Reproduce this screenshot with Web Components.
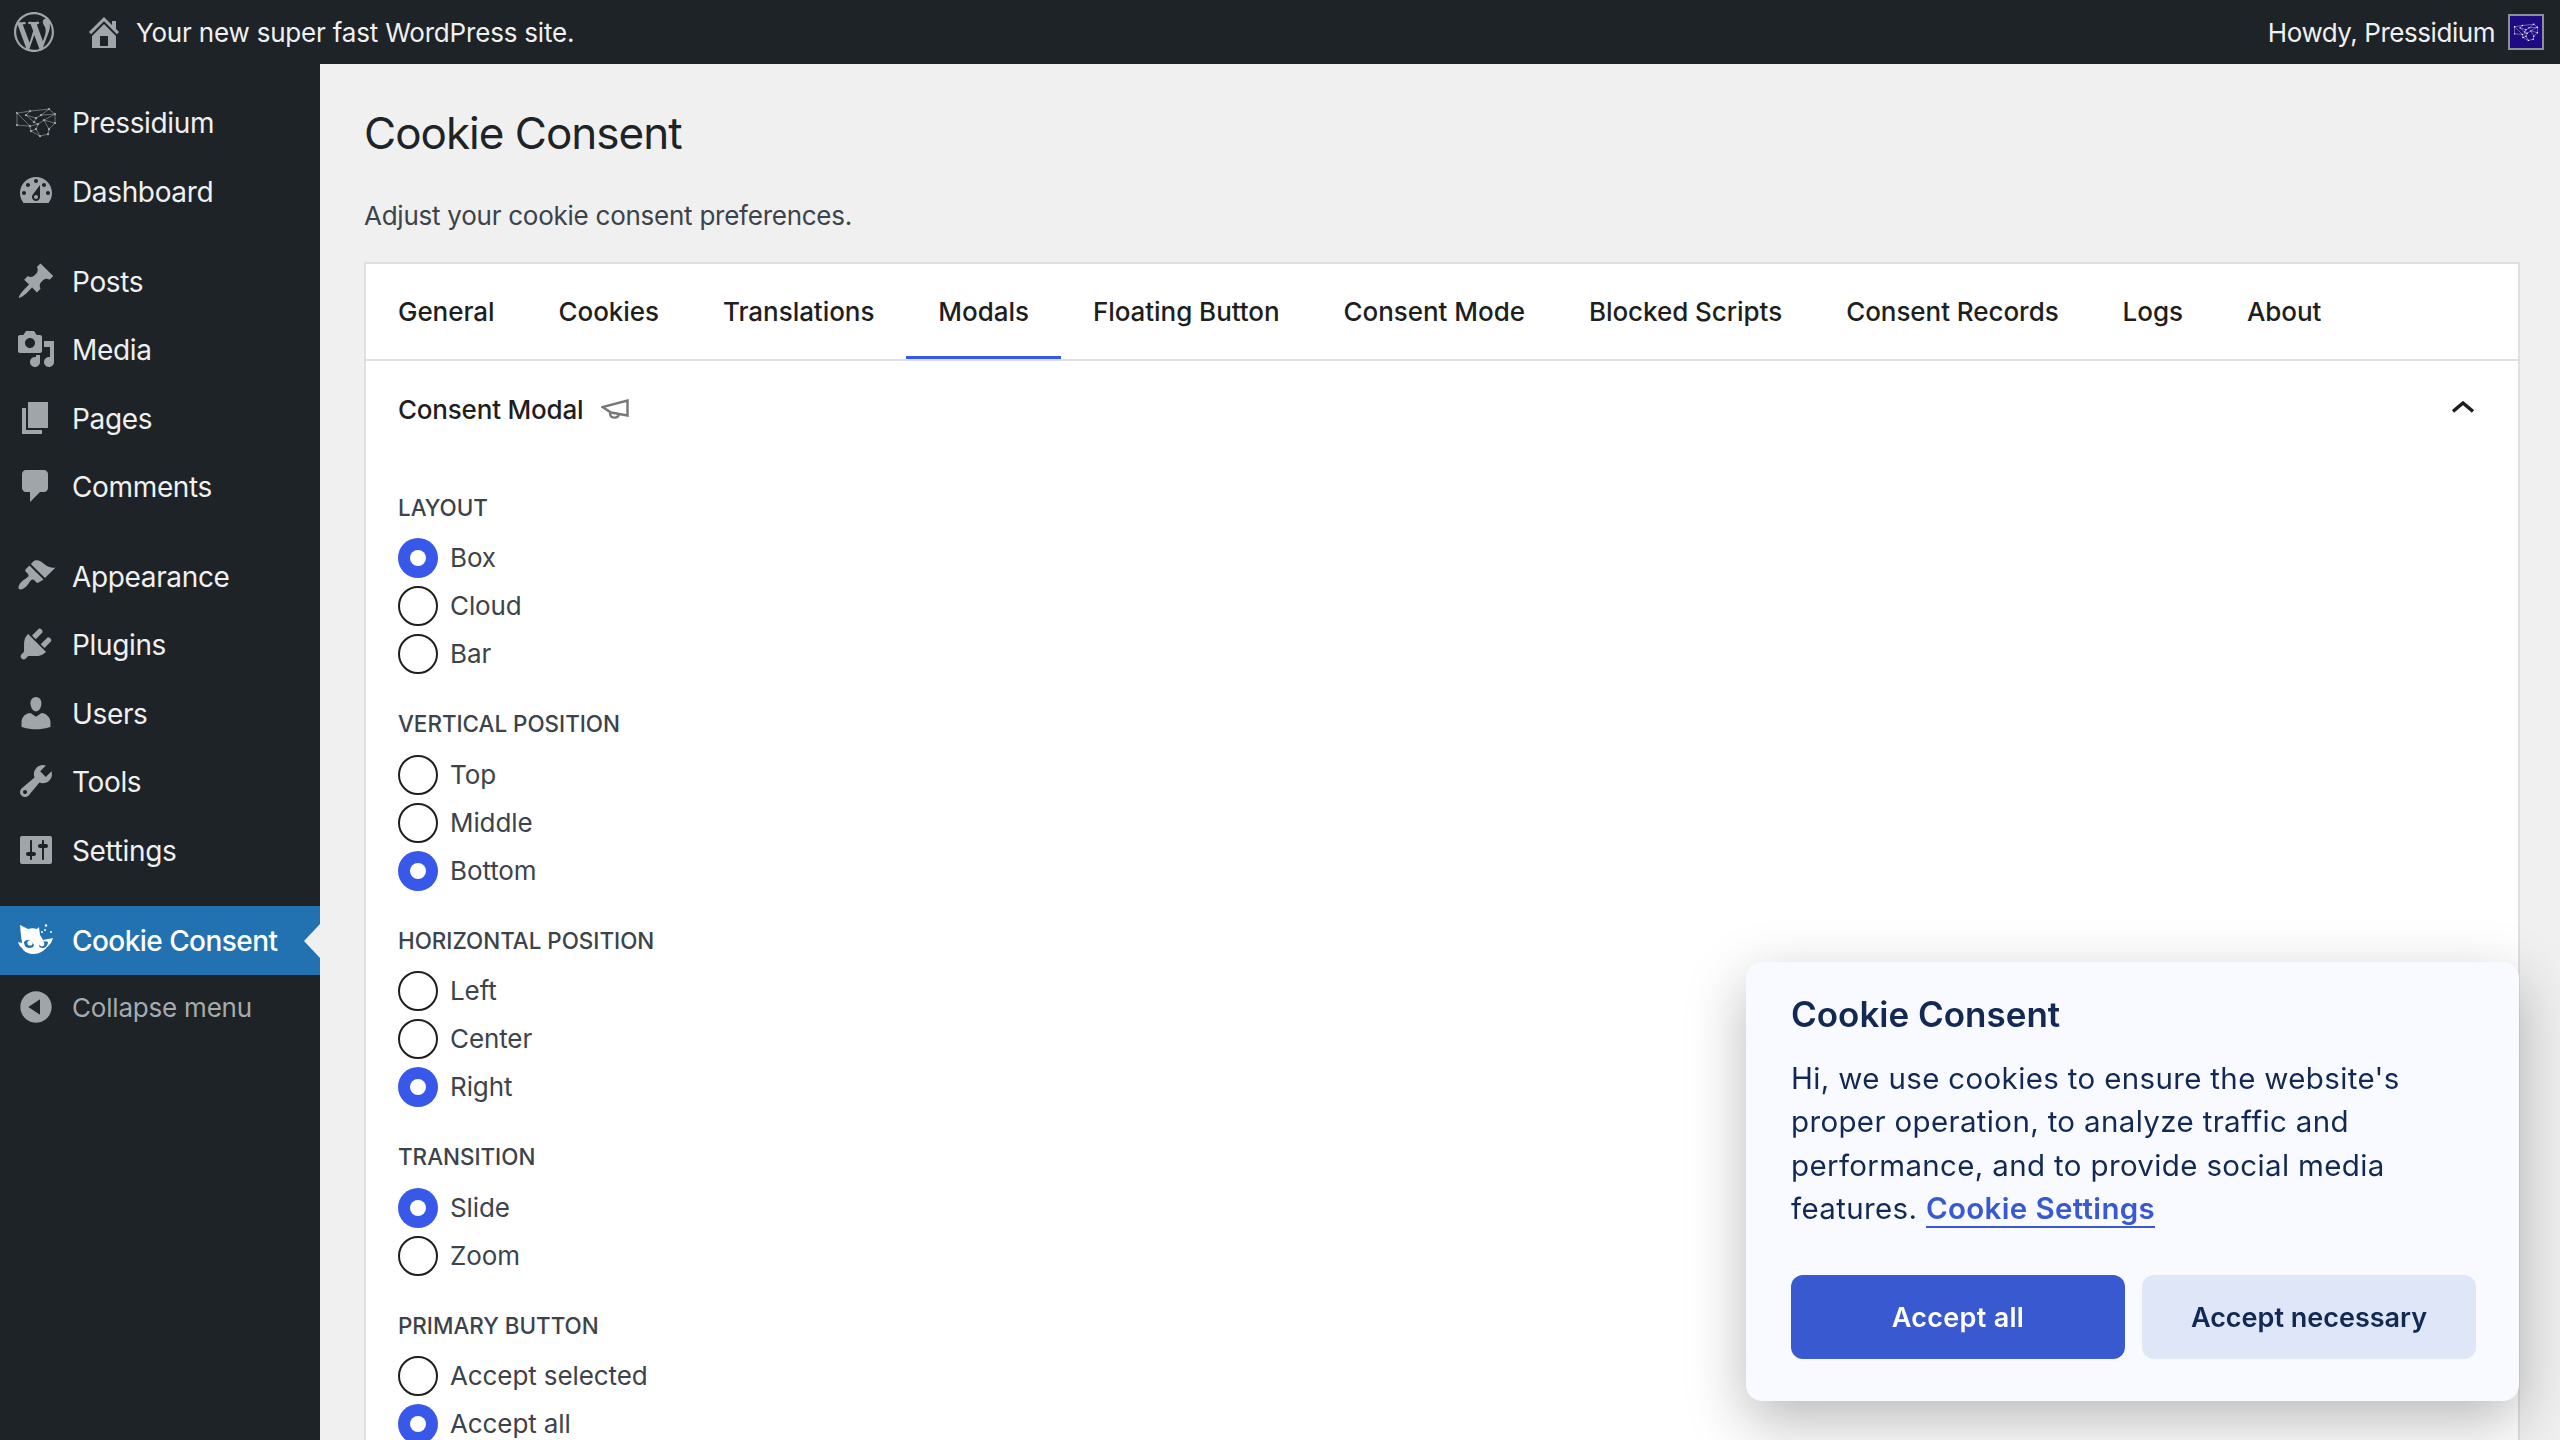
<!doctype html>
<html>
<head>
<meta charset="utf-8">
<title>Cookie Consent</title>
<style>
  html, body { margin: 0; height: 100%; }
  body {
    font-family: Inter, "Liberation Sans", sans-serif;
    background: #f0f0f0;
    overflow: hidden;
    display: grid;
    grid-template: 64px 1fr / 320px 1fr;
    width: 2560px;
    height: 1440px;
  }
  wp-admin-bar { grid-column: 1 / 3; }
</style>
</head>
<body>

<wp-admin-bar>
  <span slot="site">Your new super fast WordPress site.</span>
  <span slot="user">Howdy, Pressidium</span>
</wp-admin-bar>

<wp-sidebar>
  <wp-menu-item icon="pressidium">Pressidium</wp-menu-item>
  <wp-menu-item icon="dashboard">Dashboard</wp-menu-item>
  <wp-menu-sep></wp-menu-sep>
  <wp-menu-item icon="post">Posts</wp-menu-item>
  <wp-menu-item icon="media">Media</wp-menu-item>
  <wp-menu-item icon="page">Pages</wp-menu-item>
  <wp-menu-item icon="comments">Comments</wp-menu-item>
  <wp-menu-sep></wp-menu-sep>
  <wp-menu-item icon="appearance">Appearance</wp-menu-item>
  <wp-menu-item icon="plugins">Plugins</wp-menu-item>
  <wp-menu-item icon="users">Users</wp-menu-item>
  <wp-menu-item icon="tools">Tools</wp-menu-item>
  <wp-menu-item icon="settings">Settings</wp-menu-item>
  <wp-menu-sep></wp-menu-sep>
  <wp-menu-item icon="cookie" current>Cookie Consent</wp-menu-item>
  <wp-menu-item icon="collapse" muted>Collapse menu</wp-menu-item>
</wp-sidebar>

<cc-page>
  <span slot="title">Cookie Consent</span>
  <span slot="desc">Adjust your cookie consent preferences.</span>
  <cc-tabs>
    <cc-tab>General</cc-tab>
    <cc-tab>Cookies</cc-tab>
    <cc-tab>Translations</cc-tab>
    <cc-tab active>Modals</cc-tab>
    <cc-tab>Floating Button</cc-tab>
    <cc-tab>Consent Mode</cc-tab>
    <cc-tab>Blocked Scripts</cc-tab>
    <cc-tab>Consent Records</cc-tab>
    <cc-tab>Logs</cc-tab>
    <cc-tab>About</cc-tab>
  </cc-tabs>
  <cc-panel heading="Consent Modal">
    <cc-group label="Layout">
      <cc-radio checked>Box</cc-radio>
      <cc-radio>Cloud</cc-radio>
      <cc-radio>Bar</cc-radio>
    </cc-group>
    <cc-group label="Vertical Position">
      <cc-radio>Top</cc-radio>
      <cc-radio>Middle</cc-radio>
      <cc-radio checked>Bottom</cc-radio>
    </cc-group>
    <cc-group label="Horizontal Position">
      <cc-radio>Left</cc-radio>
      <cc-radio>Center</cc-radio>
      <cc-radio checked>Right</cc-radio>
    </cc-group>
    <cc-group label="Transition">
      <cc-radio checked>Slide</cc-radio>
      <cc-radio>Zoom</cc-radio>
    </cc-group>
    <cc-group label="Primary Button">
      <cc-radio>Accept selected</cc-radio>
      <cc-radio checked>Accept all</cc-radio>
    </cc-group>
  </cc-panel>
</cc-page>

<cc-modal>
  <span slot="title">Cookie Consent</span>
  Hi, we use cookies to ensure the website's<br>proper operation, to analyze traffic and<br>performance, and to provide social media<br>features. <a href="#" style="color:#3859d0;font-weight:600;text-decoration:none;border-bottom:2px solid #3859d0">Cookie Settings</a>
</cc-modal>

<script>
// dashicons, 20x20
const ICONS = {
  wordpress: 'M20 10c0-5.51-4.49-10-10-10C4.48 0 0 4.49 0 10c0 5.52 4.48 10 10 10 5.51 0 10-4.48 10-10zM7.78 15.37L4.37 6.22c.55-.02 1.17-.08 1.17-.08.5-.06.44-1.13-.06-1.11 0 0-1.45.11-2.37.11-.18 0-.37 0-.58-.01C4.12 2.69 6.87 1.11 10 1.11c2.33 0 4.45.87 6.05 2.34-.68-.11-1.65.39-1.65 1.58 0 .74.45 1.36.9 2.1.35.61.55 1.36.55 2.46 0 1.49-1.4 5-1.4 5l-3.03-8.37c.54-.02.82-.17.82-.17.5-.05.44-1.25-.06-1.22 0 0-1.44.12-2.38.12-.87 0-2.33-.12-2.33-.12-.5-.03-.56 1.2-.06 1.22l.92.08 1.26 3.41zM17.41 10c.24-.64.74-1.87.43-4.25.7 1.29 1.05 2.71 1.05 4.25 0 3.29-1.73 6.24-4.4 7.78.97-2.59 1.94-5.2 2.92-7.78zM6.1 18.09C3.12 16.65 1.11 13.53 1.11 10c0-1.3.23-2.48.72-3.59C3.25 10.3 4.67 14.2 6.1 18.09zm4.03-6.63l2.58 6.98c-.86.29-1.76.45-2.71.45-.79 0-1.57-.11-2.29-.33.81-2.38 1.62-4.74 2.42-7.1z',
  home: 'M16 8.5l1.53 1.53-1.06 1.06L10 4.62l-6.47 6.47-1.06-1.06L10 2.5l4 4v-2h2v4zm-6-2.46l6 5.99V18H4v-5.97zM12 17v-5H8v5h4z',
  dashboard: 'M3.76 16h12.48c1.1-1.37 1.76-3.11 1.76-5 0-4.42-3.58-8-8-8s-8 3.58-8 8c0 1.89.66 3.63 1.76 5zM10 4c.55 0 1 .45 1 1s-.45 1-1 1-1-.45-1-1 .45-1 1-1zM6 6c.55 0 1 .45 1 1s-.45 1-1 1-1-.45-1-1 .45-1 1-1zm8 0c.55 0 1 .45 1 1s-.45 1-1 1-1-.45-1-1 .45-1 1-1zm-5.37 5.55L12 7v6c0 1.1-.9 2-2 2s-2-.9-2-2c0-.57.24-1.08.63-1.45zM4 10c.55 0 1 .45 1 1s-.45 1-1 1-1-.45-1-1 .45-1 1-1zm12 0c.55 0 1 .45 1 1s-.45 1-1 1-1-.45-1-1 .45-1 1-1zm-5 3c0-.55-.45-1-1-1s-1 .45-1 1 .45 1 1 1 1-.45 1-1z',
  post: 'M10.44 3.02l1.82-1.82 6.36 6.35-1.83 1.82c-1.05-.68-2.48-.57-3.41.36l-.75.75c-.92.93-1.04 2.35-.35 3.41l-1.83 1.82-2.41-2.41-2.8 2.79c-.42.42-3.38 2.71-3.8 2.29s1.86-3.39 2.28-3.81l2.79-2.79L4.1 9.36l1.83-1.82c1.05.69 2.48.57 3.4-.36l.75-.75c.93-.92 1.05-2.35.36-3.41z',
  media: 'M13 11V4c0-.55-.45-1-1-1h-1.67L9 1H5L3.67 3H2c-.55 0-1 .45-1 1v7c0 .55.45 1 1 1h10c.55 0 1-.45 1-1zM7 4.5c1.38 0 2.5 1.12 2.5 2.5S8.38 9.5 7 9.5 4.5 8.38 4.5 7 5.62 4.5 7 4.5zM14 6h5v10.5c0 1.38-1.12 2.5-2.5 2.5S14 17.88 14 16.5s1.12-2.5 2.5-2.5c.17 0 .34.02.5.05V9h-3V6zm-4 8.05V13h2v3.5c0 1.38-1.12 2.5-2.5 2.5S7 17.88 7 16.5 8.12 14 9.5 14c.17 0 .34.02.5.05z',
  page: 'M6 15V2h10v13H6zm-1 1h8v2H3V5h2v11z',
  comments: 'M5 2h9c1.1 0 2 .9 2 2v7c0 1.1-.9 2-2 2h-2l-5 5v-5H5c-1.1 0-2-.9-2-2V4c0-1.1.9-2 2-2z',
  appearance: 'M14.48 11.06L7.41 3.99l1.5-1.5c.5-.56 2.3-.47 3.51.32 1.21.8 1.43 1.28 2.91 2.1 1.18.64 2.45 1.26 4.45.85zm-.71.71L6.7 4.7 4.93 6.47c-.39.39-.39 1.02 0 1.41l1.06 1.06c.39.39.39 1.03 0 1.42-.6.6-1.43 1.11-2.21 1.69-.35.26-.7.53-1.01.84-1.34 1.34-1.86 3.1-1.27 3.61.51.59 2.27.07 3.61-1.27.31-.31.58-.66.84-1.01.58-.78 1.09-1.61 1.69-2.21.39-.39 1.02-.39 1.41 0l1.06 1.06c.39.39 1.02.39 1.41 0z',
  plugins: 'M13.11 4.36L9.87 7.6 8 5.73l3.24-3.24c.35-.34 1.05-.2 1.56.32.52.51.66 1.21.31 1.55zm-8 1.77l.91-1.12 9.01 9.01-1.19.84c-.71.71-2.63 1.16-3.82 1.16H6.14L4.9 17.26c-.59.59-1.54.59-2.12 0-.59-.58-.59-1.53 0-2.12l1.24-1.24v-3.88c0-1.13.4-3.19 1.09-3.89zm7.26 3.97l3.24-3.24c.34-.35 1.04-.21 1.55.31.52.51.66 1.21.31 1.55l-3.24 3.25z',
  users: 'M10 9.25c-2.27 0-2.73-3.44-2.73-3.44C7 4.02 7.82 2 9.97 2c2.16 0 2.98 2.02 2.71 3.81 0 0-.41 3.44-2.68 3.44zm0 2.57L12.72 10c2.39 0 4.52 2.33 4.52 4.53v2.49s-3.65 1.13-7.24 1.13c-3.65 0-7.24-1.13-7.24-1.13v-2.49c0-2.25 1.94-4.48 4.47-4.48z',
  tools: 'M16.68 9.77c-1.34 1.34-3.3 1.67-4.95.99l-5.41 6.52c-.99.99-2.59.99-3.58 0s-.99-2.59 0-3.57l6.52-5.42c-.68-1.65-.35-3.61.99-4.95 1.28-1.28 3.12-1.62 4.72-1.06l-2.89 2.89 2.82 2.82 2.86-2.87c.53 1.58.18 3.39-1.08 4.65zM3.81 16.21c.4.39 1.04.39 1.43 0 .4-.4.4-1.04 0-1.43-.39-.4-1.03-.4-1.43 0-.39.39-.39 1.03 0 1.43z',
  settings: 'M18 16V4c0-.55-.45-1-1-1H3c-.55 0-1 .45-1 1v12c0 .55.45 1 1 1h14c.55 0 1-.45 1-1zM8 11h1c.55 0 1 .45 1 1s-.45 1-1 1H8v1.5c0 .28-.22.5-.5.5s-.5-.22-.5-.5V13H6c-.55 0-1-.45-1-1s.45-1 1-1h1V5.5c0-.28.22-.5.5-.5s.5.22.5.5V11zm5-2h-1c-.55 0-1-.45-1-1s.45-1 1-1h1V5.5c0-.28.22-.5.5-.5s.5.22.5.5V7h1c.55 0 1 .45 1 1s-.45 1-1 1h-1v5.5c0 .28-.22.5-.5.5s-.5-.22-.5-.5V9z',
  collapse: 'M10 2.16c4.33 0 7.84 3.51 7.84 7.84s-3.51 7.84-7.84 7.84S2.16 14.33 2.16 10 5.71 2.16 10 2.16zm2 11.72V6.12L6.18 9.97z'
};

function dash(name, size) {
  return `<svg width="${size}" height="${size}" viewBox="0 0 20 20" fill="currentColor"><path d="${ICONS[name]}"/></svg>`;
}

// wireframe cube logo, points are rough
function pressidiumLogo(size, color) {
  const pts = [[1,6],[1,18],[14,4],[33,2],[39,7],[39,16],[33,22],[32,27],[24,29],[15,24],[14,19],[22,17],[25,8],[20,11],[10,8],[18,15],[28,13],[20,22]];
  const links = [[0,1],[0,2],[2,3],[3,4],[4,5],[5,6],[6,7],[7,8],[8,9],[9,10],[10,1],[10,0],[2,14],[14,13],[13,12],[12,3],[12,4],[13,15],[15,11],[11,16],[16,4],[11,10],[11,17],[17,8],[17,9],[14,15],[16,5],[6,16]];
  const l = links.map(([a,b]) => `<line x1="${pts[a][0]}" y1="${pts[a][1]}" x2="${pts[b][0]}" y2="${pts[b][1]}"/>`).join('');
  const c = pts.map(p => `<circle cx="${p[0]}" cy="${p[1]}" r="1.2" fill="${color}" stroke="none"/>`).join('');
  return `<svg width="${size}" height="${size * 0.78}" viewBox="0 0 40 31" fill="none" stroke="${color}" stroke-width=".6">${l}${c}</svg>`;
}

// cat head for the plugin menu item
const catIcon = `<svg width="36" height="32" viewBox="0 0 36 32">
  <path fill="#fff" d="M2 1l8 4c3-1 6-1 9 0l2-2 1 8c1 1 2 3 3 5l5-1c2 0 4-1 5-1-1 4-3 7-6 9-3 4-8 7-13 7S6 28 4 24c-2-1-3-3-4-6l4 1c0-3-1-5-1-7z"/>
  <path fill="#2271b1" d="M6 18c2-3 7-3 10 3 0 2-2 3-5 3-3 0-5-3-5-6zM30 18c-3-2-7 0-9 4 1 2 3 2 5 2 2-1 4-3 4-6z"/>
  <circle cx="12" cy="19" r="2.6" fill="#fff"/><circle cx="24" cy="20" r="2.4" fill="#fff"/>
  <circle cx="28" cy="1.5" r="1.2" fill="#fff"/><circle cx="27" cy="6" r="1" fill="#fff"/><circle cx="33" cy="8" r="1" fill="#fff"/><circle cx="24" cy="8" r="1" fill="#fff"/>
</svg>`;

class WpAdminBar extends HTMLElement {
  constructor() {
    super();
    this.attachShadow({mode: 'open'}).innerHTML = `
      <style>
        :host { display: flex; align-items: center; height: 64px; background: #1d2327; color: #f0f0f1; font-size: 26px; letter-spacing: -.19px; }
        ::slotted([slot=user]) { letter-spacing: -.45px; }
        .wp { display: flex; margin-left: 14px; color: #a0a5aa; }
        .home { display: flex; margin-left: 30px; margin-right: 12px; color: #a0a5aa; }
        .grow { flex: 1; }
        .avatar { display: flex; align-items: center; justify-content: center; width: 32px; height: 32px; margin: 0 16px 0 13px; border: 2px solid #8c8f94; background: #1e0a82; }
      </style>
      <span class="wp">${dash('wordpress', 40)}</span>
      <span class="home">${dash('home', 40)}</span>
      <slot name="site"></slot>
      <span class="grow"></span>
      <slot name="user"></slot>
      <span class="avatar">${pressidiumLogo(24, '#fff')}</span>`;
  }
}

class WpSidebar extends HTMLElement {
  constructor() {
    super();
    this.attachShadow({mode: 'open'}).innerHTML = `
      <style>
        :host { display: flex; flex-direction: column; background: #1d2327; padding-top: 25px; }
      </style>
      <slot></slot>`;
  }
}

class WpMenuSep extends HTMLElement {
  constructor() {
    super();
    this.attachShadow({mode: 'open'}).innerHTML = `<style>:host { display: block; height: 21.3px; }</style>`;
  }
}

class WpMenuItem extends HTMLElement {
  constructor() {
    super();
    const name = this.getAttribute('icon');
    let icon;
    if (name === 'pressidium') icon = pressidiumLogo(40, '#a0a5aa');
    else if (name === 'cookie') icon = catIcon;
    else icon = dash(name, 40);
    this.attachShadow({mode: 'open'}).innerHTML = `
      <style>
        :host { display: flex; align-items: center; position: relative; height: 68.5px; color: #f0f0f1; font-size: 28px; letter-spacing: -.35px; }
        :host([current]) { background: #2271b1; color: #fff; font-weight: 500; letter-spacing: -.55px; }
        :host([muted]) { color: #a7aaad; font-size: 26px; height: 66px; letter-spacing: -.2px; }
        .icon { display: flex; justify-content: center; align-items: center; width: 40px; height: 40px; margin: -2px 16px 0 16px; color: #a0a5aa; }
        :host([current]) .icon { color: #fff; }
        :host([current])::after {
          content: ""; position: absolute; right: 0; top: 50%; margin-top: -17px;
          border: 17px solid transparent; border-left-width: 0; border-right: 16px solid #f0f0f0;
        }
      </style>
      <span class="icon">${icon}</span>
      <slot></slot>`;
  }
}

class CcPage extends HTMLElement {
  constructor() {
    super();
    this.attachShadow({mode: 'open'}).innerHTML = `
      <style>
        :host { display: block; padding: 0 40px 0 44px; min-width: 0; overflow: hidden; }
        h1 { margin: 40px 0 0; font-size: 44px; line-height: 58px; font-weight: 400; letter-spacing: -1px; color: #1d2327; }
        p { margin: 36px 0 0; font-size: 26px; line-height: 36px; letter-spacing: -.25px; color: #3c434a; }
        .card { margin-top: 28px; background: #fff; border: 2px solid #dfdfdf; }
      </style>
      <h1><slot name="title"></slot></h1>
      <p><slot name="desc"></slot></p>
      <div class="card"><slot></slot></div>`;
  }
}

class CcTabs extends HTMLElement {
  constructor() {
    super();
    this.attachShadow({mode: 'open'}).innerHTML = `
      <style>
        :host { display: flex; height: 95px; border-bottom: 2px solid #dfdfdf; }
      </style>
      <slot></slot>`;
  }
}

class CcTab extends HTMLElement {
  constructor() {
    super();
    this.attachShadow({mode: 'open'}).innerHTML = `
      <style>
        :host { display: flex; align-items: center; padding: 3px 32px 0; font-size: 26px; letter-spacing: -.05px; font-weight: 500; color: #1e1e1e; height: 95px; box-sizing: border-box; border-bottom: 3px solid transparent; }
        :host([active]) { border-bottom-color: #3858e9; }
      </style>
      <slot></slot>`;
  }
}

class CcPanel extends HTMLElement {
  constructor() {
    super();
    this.attachShadow({mode: 'open'}).innerHTML = `
      <style>
        :host { display: block; padding: 0 32px 60px; }
        .head { display: flex; align-items: center; box-sizing: border-box; height: 96px; font-size: 26px; letter-spacing: -.2px; font-weight: 500; color: #1e1e1e; }
        .head svg.mega { margin-left: 18px; }
        .head svg.chev { margin-left: auto; margin-right: 12px; margin-top: -4px; }
        .body { display: flex; flex-direction: column; gap: 34px; padding-top: 34.5px; }
      </style>
      <div class="head">
        <span>${this.getAttribute('heading')}</span>
        <svg class="mega" width="28" height="20" viewBox="0 0 28 20" fill="none" stroke="#777" stroke-width="2.4"><path d="M26.5 1.5v15L10 13.5 1.5 8z"/><path d="M9 14c0 6 8 6 9 1"/></svg>
        <svg class="chev" width="22" height="12" viewBox="0 0 22 12" fill="none" stroke="#1e1e1e" stroke-width="3.4"><path d="M1 10.5L11 2l10 8.5"/></svg>
      </div>
      <div class="body"><slot></slot></div>`;
  }
}

class CcGroup extends HTMLElement {
  constructor() {
    super();
    this.attachShadow({mode: 'open'}).innerHTML = `
      <style>
        :host { display: flex; flex-direction: column; gap: 8px; }
        .label { font-size: 22.4px; line-height: 32px; margin-bottom: 6.5px; font-weight: 500; color: #3c434a; text-transform: uppercase; }
      </style>
      <div class="label">${this.getAttribute('label')}</div>
      <slot></slot>`;
  }
}

class CcRadio extends HTMLElement {
  constructor() {
    super();
    this.attachShadow({mode: 'open'}).innerHTML = `
      <style>
        :host { display: flex; align-items: center; gap: 12px; height: 40px; font-size: 26px; line-height: 26px; letter-spacing: -.1px; color: #3c434a; }
        .dot { width: 40px; height: 40px; box-sizing: border-box; border-radius: 50%; border: 2px solid #1e1e1e; display: flex; align-items: center; justify-content: center; background: #fff; flex: none; }
        :host([checked]) .dot { border: none; background: #3858e9; }
        :host([checked]) .dot::after { content: ""; width: 16px; height: 16px; border-radius: 50%; background: #fff; }
      </style>
      <span class="dot"></span>
      <slot></slot>`;
  }
}

class CcModal extends HTMLElement {
  constructor() {
    super();
    this.attachShadow({mode: 'open'}).innerHTML = `
      <style>
        :host {
          position: fixed; left: 1746px; top: 962px; width: 773px; height: 439px; box-sizing: border-box;
          padding: 32px 43px 0 45px; background: #f9faff; border-radius: 16px;
          box-shadow: 0 20px 60px rgba(2,2,3,.28); color: #112954; font-family: Inter, sans-serif;
        }
        h2 { margin: 0; font-size: 35px; line-height: 40px; font-weight: 600; }
        .text { margin-top: 23px; height: 174px; font-size: 29.5px; line-height: 43.4px; letter-spacing: .35px; font-weight: 400; white-space: nowrap; }
        .btns { display: flex; gap: 17px; margin-top: 44px; }
        .btn { flex: 1; height: 84px; border-radius: 12px; display: flex; align-items: center; justify-content: center; font-size: 27px; font-weight: 600; }
        .a { background: #3859d0; color: #fff; letter-spacing: .3px; }
        .b { background: #dfe6f8; color: #112954; }
      </style>
      <h2><slot name="title"></slot></h2>
      <div class="text"><slot></slot></div>
      <div class="btns"><span class="btn a">Accept all</span><span class="btn b">Accept necessary</span></div>`;
  }
}

customElements.define('wp-admin-bar', WpAdminBar);
customElements.define('wp-sidebar', WpSidebar);
customElements.define('wp-menu-sep', WpMenuSep);
customElements.define('wp-menu-item', WpMenuItem);
customElements.define('cc-page', CcPage);
customElements.define('cc-tabs', CcTabs);
customElements.define('cc-tab', CcTab);
customElements.define('cc-panel', CcPanel);
customElements.define('cc-group', CcGroup);
customElements.define('cc-radio', CcRadio);
customElements.define('cc-modal', CcModal);
</script>
</body>
</html>
